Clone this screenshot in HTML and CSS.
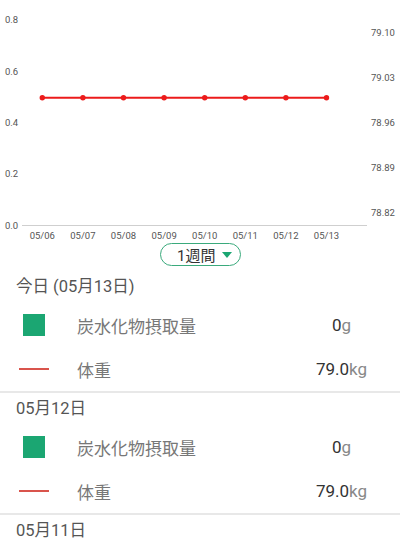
FILE: index.html
```html
<!DOCTYPE html>
<html lang="ja">
<head>
    <meta charset="UTF-8">
    <meta name="viewport" content="width=device-width, initial-scale=1.0">
    <title>炭水化物摂取量</title>
    <link rel="stylesheet" href="styles.css">
</head>
<body>
    <div class="grafico">
        <svg width="400" height="243" viewBox="0 0 400 243">
            <g class="eixo">
                <text x="5" y="23.4">0.8</text>
                <text x="5" y="74.6">0.6</text>
                <text x="5" y="126">0.4</text>
                <text x="5" y="177.4">0.2</text>
                <text x="5" y="228.6">0.0</text>

                <text x="371" y="36.4">79.10</text>
                <text x="371" y="81.2">79.03</text>
                <text x="371" y="126">78.96</text>
                <text x="371" y="170.8">78.89</text>
                <text x="371" y="215.6">78.82</text>
            </g>
            <line x1="22" y1="225.5" x2="367" y2="225.5" stroke="#cfcfcf" stroke-width="1"/>
            <g class="eixo" text-anchor="middle">
                <text x="42.3" y="238.5">05/06</text>
                <text x="82.9" y="238.5">05/07</text>
                <text x="123.5" y="238.5">05/08</text>
                <text x="164.1" y="238.5">05/09</text>
                <text x="204.7" y="238.5">05/10</text>
                <text x="245.3" y="238.5">05/11</text>
                <text x="285.9" y="238.5">05/12</text>
                <text x="326.5" y="238.5">05/13</text>
            </g>
            <line x1="42.3" y1="97.8" x2="326.5" y2="97.8" stroke="#ec1b1b" stroke-width="2"/>
            <g fill="#ec1b1b">
                <circle cx="42.3" cy="97.8" r="2.7"/>
                <circle cx="82.9" cy="97.8" r="2.7"/>
                <circle cx="123.5" cy="97.8" r="2.7"/>
                <circle cx="164.1" cy="97.8" r="2.7"/>
                <circle cx="204.7" cy="97.8" r="2.7"/>
                <circle cx="245.3" cy="97.8" r="2.7"/>
                <circle cx="285.9" cy="97.8" r="2.7"/>
                <circle cx="326.5" cy="97.8" r="2.7"/>
            </g>
        </svg>
    </div>

    <div class="periodo">
        <button class="pilula">1週間 <span class="seta"></span></button>
    </div>

    <div class="dia">
        <div class="titulo">今日 (05月13日)</div>
        <div class="linha">
            <span class="icone"><span class="quadrado"></span></span>
            <span class="nome">炭水化物摂取量</span>
            <span class="valor">0<span class="unidade">g</span></span>
        </div>
        <div class="linha">
            <span class="icone"><span class="traco"></span></span>
            <span class="nome">体重</span>
            <span class="valor">79.0<span class="unidade">kg</span></span>
        </div>
    </div>

    <div class="dia">
        <div class="titulo">05月12日</div>
        <div class="linha">
            <span class="icone"><span class="quadrado"></span></span>
            <span class="nome">炭水化物摂取量</span>
            <span class="valor">0<span class="unidade">g</span></span>
        </div>
        <div class="linha">
            <span class="icone"><span class="traco"></span></span>
            <span class="nome">体重</span>
            <span class="valor">79.0<span class="unidade">kg</span></span>
        </div>
    </div>

    <div class="dia">
        <div class="titulo">05月11日</div>
    </div>
</body>
</html>
```

FILE: styles.css
```css
body{
    margin: 0;
    padding: 0;
    font-family: Roboto, "Noto Sans CJK JP", sans-serif;
    background-color: white;
    color: #333;
    overflow: hidden;
}
.grafico svg{
    display: block;
}
.eixo text{
    font-family: Roboto, sans-serif;
    font-size: 9.5px;
    fill: #555;
}
.periodo{
    display: flex;
    justify-content: center;
    padding-bottom: 5px;
}
.pilula{
    display: flex;
    align-items: center;
    justify-content: flex-end;
    gap: 6px;
    width: 81px;
    height: 23px;
    padding: 0 8px 0 0;
    border: 1.5px solid #3aaa7c;
    border-radius: 12px;
    background-color: white;
    font-family: Roboto, "Noto Sans CJK JP", sans-serif;
    font-size: 15px;
    color: #333;
}
.seta{
    width: 0;
    height: 0;
    border-left: 5px solid transparent;
    border-right: 5px solid transparent;
    border-top: 6px solid #1ba672;
}
.dia{
    border-bottom: 2px solid #e8e8e8;
}
.dia:last-child{
    border-bottom: none;
}
.titulo{
    height: 32px;
    line-height: 32px;
    padding-left: 16px;
    font-size: 16.5px;
    color: #555;
}
.linha{
    display: grid;
    grid-template-columns: 68px 1fr 81px;
    align-items: center;
    height: 44px;
    padding-right: 18px;
}
.icone{
    display: flex;
    justify-content: center;
}
.quadrado{
    width: 22px;
    height: 22px;
    background-color: #1ba672;
}
.traco{
    width: 30px;
    height: 2px;
    background-color: #d9544c;
}
.nome{
    padding-left: 9px;
    font-size: 17px;
    color: #777;
}
.valor{
    text-align: center;
    font-size: 17px;
    color: #333;
}
.unidade{
    color: #888;
}
```
